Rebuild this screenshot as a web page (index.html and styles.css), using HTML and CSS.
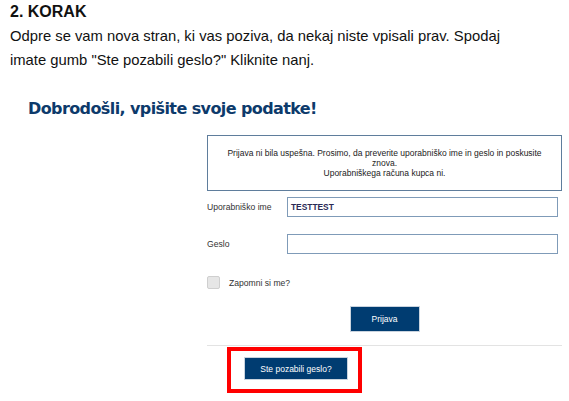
FILE: index.html
```html
<!DOCTYPE html>
<html lang="sl">
<head>
<meta charset="utf-8">
<link rel="stylesheet" href="styles.css">
</head>
<body>
<div class="page">
  <h2 class="step">2. KORAK</h2>
  <p class="intro">Odpre se vam nova stran, ki vas poziva, da nekaj niste vpisali prav. Spodaj imate gumb "Ste pozabili geslo?" Kliknite nanj.</p>
  <div class="shot">
    <h1 class="welcome">Dobrodošli, vpišite svoje podatke!</h1>
    <div class="form">
      <div class="alert">Prijava ni bila uspešna. Prosimo, da preverite uporabniško ime in geslo in poskusite znova.<br>Uporabniškega računa kupca ni.</div>
      <div class="row user">
        <span class="label">Uporabniško ime</span>
        <div class="input">TESTTEST</div>
      </div>
      <div class="row pass">
        <span class="label">Geslo</span>
        <div class="input"></div>
      </div>
      <div class="remember">
        <span class="check"></span>
        <span class="label">Zapomni si me?</span>
      </div>
      <div class="submit-row">
        <span class="btn login">Prijava</span>
      </div>
      <div class="divider"></div>
      <div class="highlight">
        <span class="btn forgot">Ste pozabili geslo?</span>
      </div>
    </div>
  </div>
</div>
</body>
</html>
```
FILE: styles.css
```css
html, body {
  margin: 0;
  padding: 0;
  background: #fff;
}
.page {
  padding: 0 10px;
  font-family: "Liberation Sans", Arial, sans-serif;
  color: #111;
}
.step {
  margin: 0;
  font-size: 16px;
  line-height: 24px;
  font-weight: bold;
}
.intro {
  margin: 0;
  font-size: 14.8px;
  line-height: 24px;
  width: 505px;
}
.shot {
  margin-top: 26px;
  font-family: "Liberation Sans", Arial, sans-serif;
}
.welcome {
  margin: 0 0 0 18px;
  font-family: "DejaVu Sans", sans-serif;
  font-weight: bold;
  font-size: 16px;
  line-height: 22px;
  letter-spacing: -0.6px;
  color: #0d3a6b;
}
.form {
  margin: 15px 0 0 197px;
  width: 355px;
  font-size: 8.6px;
  color: #333;
}
.alert {
  border: 1px solid #5f7d9c;
  height: 56px;
  box-sizing: border-box;
  padding: 12px 12px 0;
  text-align: center;
  line-height: 10px;
  font-size: 8.5px;
  color: #222;
}
.row {
  display: flex;
  align-items: center;
}
.row.user {
  margin-top: 6px;
}
.row.pass {
  margin-top: 17px;
}
.row .label {
  width: 80px;
}
.input {
  width: 271px;
  height: 20px;
  box-sizing: border-box;
  border: 1px solid #7f9bb8;
  font-size: 8.4px;
  font-weight: bold;
  color: #2a2a55;
  padding-left: 3px;
  line-height: 18px;
}
.remember {
  display: flex;
  align-items: center;
  margin-top: 22px;
}
.check {
  width: 11px;
  height: 11px;
  border: 1px solid #cfcfcf;
  border-radius: 2px;
  background: #e6e6e6;
  margin-right: 9px;
}
.submit-row {
  display: flex;
  justify-content: center;
  margin-top: 17px;
}
.btn {
  display: flex;
  align-items: center;
  justify-content: center;
  background: #003c71;
  color: #fff;
  font-size: 8.5px;
  border: 1px solid #c9d3de;
  box-sizing: border-box;
}
.btn.login {
  width: 70px;
  height: 26px;
}
.divider {
  margin-top: 13px;
  height: 1px;
  background: #e3e3e3;
}
.highlight {
  margin: 1px 0 0 20px;
  width: 135px;
  height: 46px;
  box-sizing: border-box;
  border: 4px solid #ff0000;
  padding: 6px 0 0 13px;
}
.btn.forgot {
  width: 104px;
  height: 23px;
}
```
